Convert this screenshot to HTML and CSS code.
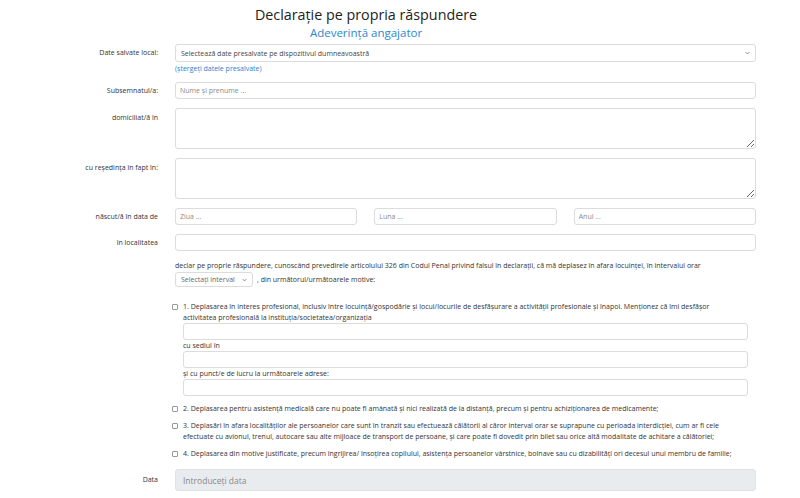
FILE: index.html
```html
<!DOCTYPE html>
<html lang="ro">
<head>
  <meta charset="UTF-8">
  <title>Declarație pe propria răspundere</title>
  <link rel="stylesheet" href="styles.css">
</head>
<body>
  <header class="page-head">
    <h1>Declarație pe propria răspundere</h1>
    <h2>Adeverință angajator</h2>
  </header>

  <form class="decl-form">
    <div class="row">
      <label class="row-label">Date salvate local:</label>
      <div class="row-field">
        <div class="select-box wide">
          <span>Selectează date presalvate pe dispozitivul dumneavoastră</span>
          <svg class="chev" viewBox="0 0 8 5"><path d="M1 1 L4 4 L7 1"/></svg>
        </div>
        <a class="small-link" href="#">(ștergeți datele presalvate)</a>
      </div>
    </div>

    <div class="row">
      <label class="row-label">Subsemnatul/a:</label>
      <div class="row-field"><input class="txt" placeholder="Nume și prenume ..."></div>
    </div>

    <div class="row top">
      <label class="row-label">domiciliat/ă în</label>
      <div class="row-field"><textarea class="area"></textarea></div>
    </div>

    <div class="row top">
      <label class="row-label">cu reședința în fapt în:</label>
      <div class="row-field"><textarea class="area"></textarea></div>
    </div>

    <div class="row">
      <label class="row-label">născut/ă în data de</label>
      <div class="row-field three">
        <input class="txt" placeholder="Ziua ...">
        <input class="txt" placeholder="Luna ...">
        <input class="txt" placeholder="Anul ...">
      </div>
    </div>

    <div class="row">
      <label class="row-label">în localitatea</label>
      <div class="row-field"><input class="txt"></div>
    </div>

    <div class="row">
      <span class="row-label"></span>
      <div class="row-field statement">
        <p>declar pe proprie răspundere, cunoscând prevedirele articolului 326 din Codul Penal privind falsul în declarații, că mă deplasez în afara locuinței, în intervalul orar</p>
        <div class="interval-line">
          <div class="select-box small">
            <span>Selectați interval</span>
            <svg class="chev" viewBox="0 0 8 5"><path d="M1 1 L4 4 L7 1"/></svg>
          </div>
          <span>, din următorul/următoarele motive:</span>
        </div>
      </div>
    </div>

    <div class="row reasons-row">
      <span class="row-label"></span>
      <div class="row-field reasons">
        <div class="reason">
          <input type="checkbox" class="chk">
          <div class="reason-body">
            <p>1. Deplasarea în interes profesional, inclusiv între locuință/gospodărie și locul/locurile de desfășurare a activității profesionale și înapoi. Menționez că îmi desfășor<br>activitatea profesională la instituția/societatea/organizația</p>
            <input class="txt">
            <p class="sub">cu sediul în</p>
            <input class="txt">
            <p class="sub">și cu punct/e de lucru la următoarele adrese:</p>
            <input class="txt">
          </div>
        </div>
        <div class="reason">
          <input type="checkbox" class="chk">
          <div class="reason-body">
            <p>2. Deplasarea pentru asistență medicală care nu poate fi amânată și nici realizată de la distanță, precum și pentru achizițíonarea de medicamente;</p>
          </div>
        </div>
        <div class="reason">
          <input type="checkbox" class="chk">
          <div class="reason-body">
            <p>3. Deplasări în afara localităților ale persoanelor care sunt în tranzit sau efectuează călătorii al căror interval orar se suprapune cu perioada interdicției, cum ar fi cele efectuate cu avionul, trenul, autocare sau alte mijloace de transport de persoane, și care poate fi dovedit prin bilet sau orice altă modalitate de achitare a călătoriei;</p>
          </div>
        </div>
        <div class="reason">
          <input type="checkbox" class="chk">
          <div class="reason-body">
            <p>4. Deplasarea din motive justificate, precum îngrijirea/ însoțirea copilului, asistența persoanelor vârstnice, bolnave sau cu dizabilități ori decesul unui membru de familie;</p>
          </div>
        </div>
      </div>
    </div>

    <div class="row">
      <label class="row-label date-label">Data</label>
      <div class="row-field"><input class="txt date" placeholder="Introduceți data" readonly></div>
    </div>
  </form>
</body>
</html>
```

FILE: styles.css
```css
body {
  margin: 0;
  background: #fff;
  font-family: "Open Sans", "Noto Sans", sans-serif;
  color: #333;
  font-size: 7px;
  overflow: hidden;
}

.page-head {
  width: 732px;
  text-align: center;
  padding-top: 5px;
}

.page-head h1 {
  margin: 0;
  font-size: 14.3px;
  font-weight: 400;
  color: #222;
  line-height: 20px;
}

.page-head h2 {
  margin: 0;
  font-size: 11.5px;
  font-weight: 400;
  color: #2b87d1;
  line-height: 16px;
}

.decl-form {
  width: 756px;
  margin-top: 3px;
}

.row {
  display: grid;
  grid-template-columns: 158px 581px;
  column-gap: 17px;
  align-items: start;
  margin-bottom: 9px;
}

.row-label {
  text-align: right;
  color: #333;
  line-height: 17px;
}

.row.top .row-label {
  line-height: 19px;
}

.select-box {
  display: flex;
  align-items: center;
  justify-content: space-between;
  box-sizing: border-box;
  border: 1px solid #dcdcdc;
  border-radius: 3px;
  background: #fff;
  color: #444;
  height: 18px;
  padding: 0 5px;
}

.select-box.small {
  width: 78px;
  height: 15px;
  color: #666;
}

.chev {
  width: 5px;
  height: 4px;
  fill: none;
  stroke: #666;
  stroke-width: 1.2;
}

.small-link {
  display: block;
  color: #2b7fd0;
  text-decoration: none;
  font-size: 7px;
  margin-top: 3px;
  line-height: 8px;
}

.txt {
  display: block;
  box-sizing: border-box;
  width: 100%;
  height: 17px;
  border: 1px solid #dcdcdc;
  border-radius: 3px;
  padding: 0 4px;
  font: inherit;
  color: #444;
  background: #fff;
}

.txt::placeholder {
  color: #8a8a8a;
}

.txt.date {
  height: 22px;
  background: #e9ecef;
  border-color: #e2e2e2;
  font-size: 8.5px;
  padding: 0 7px;
}

.txt.date::placeholder {
  color: #888;
}

.date-label {
  line-height: 22px;
}

.area {
  display: block;
  box-sizing: border-box;
  width: 100%;
  height: 41px;
  border: 1px solid #dcdcdc;
  border-radius: 3px;
  font: inherit;
  resize: vertical;
}

.three {
  display: grid;
  grid-template-columns: repeat(3, 1fr);
  column-gap: 17px;
}

.statement p {
  margin: 0;
  line-height: 11px;
}

.interval-line {
  display: flex;
  align-items: center;
  gap: 4px;
  margin-top: 1px;
}

.reasons {
  margin-top: 5px;
}

.reasons-row {
  margin-bottom: 10px;
}

.reason {
  display: flex;
  align-items: flex-start;
  gap: 5px;
  margin-bottom: 6px;
}

.reason:first-child {
  margin-bottom: 7px;
}

.reason:last-child {
  margin-bottom: 0;
}

.chk {
  appearance: none;
  box-sizing: border-box;
  margin: 3px 0 0 -3px;
  width: 6px;
  height: 6px;
  border: 1px solid #999;
  border-radius: 1px;
  background: #fff;
  flex: none;
}

.reason-body {
  flex: 1;
  padding-right: 8px;
}

.reason-body p {
  margin: 0;
  line-height: 11px;
}

.reason-body p.sub {
  margin-top: 1px;
  line-height: 10px;
}
```
